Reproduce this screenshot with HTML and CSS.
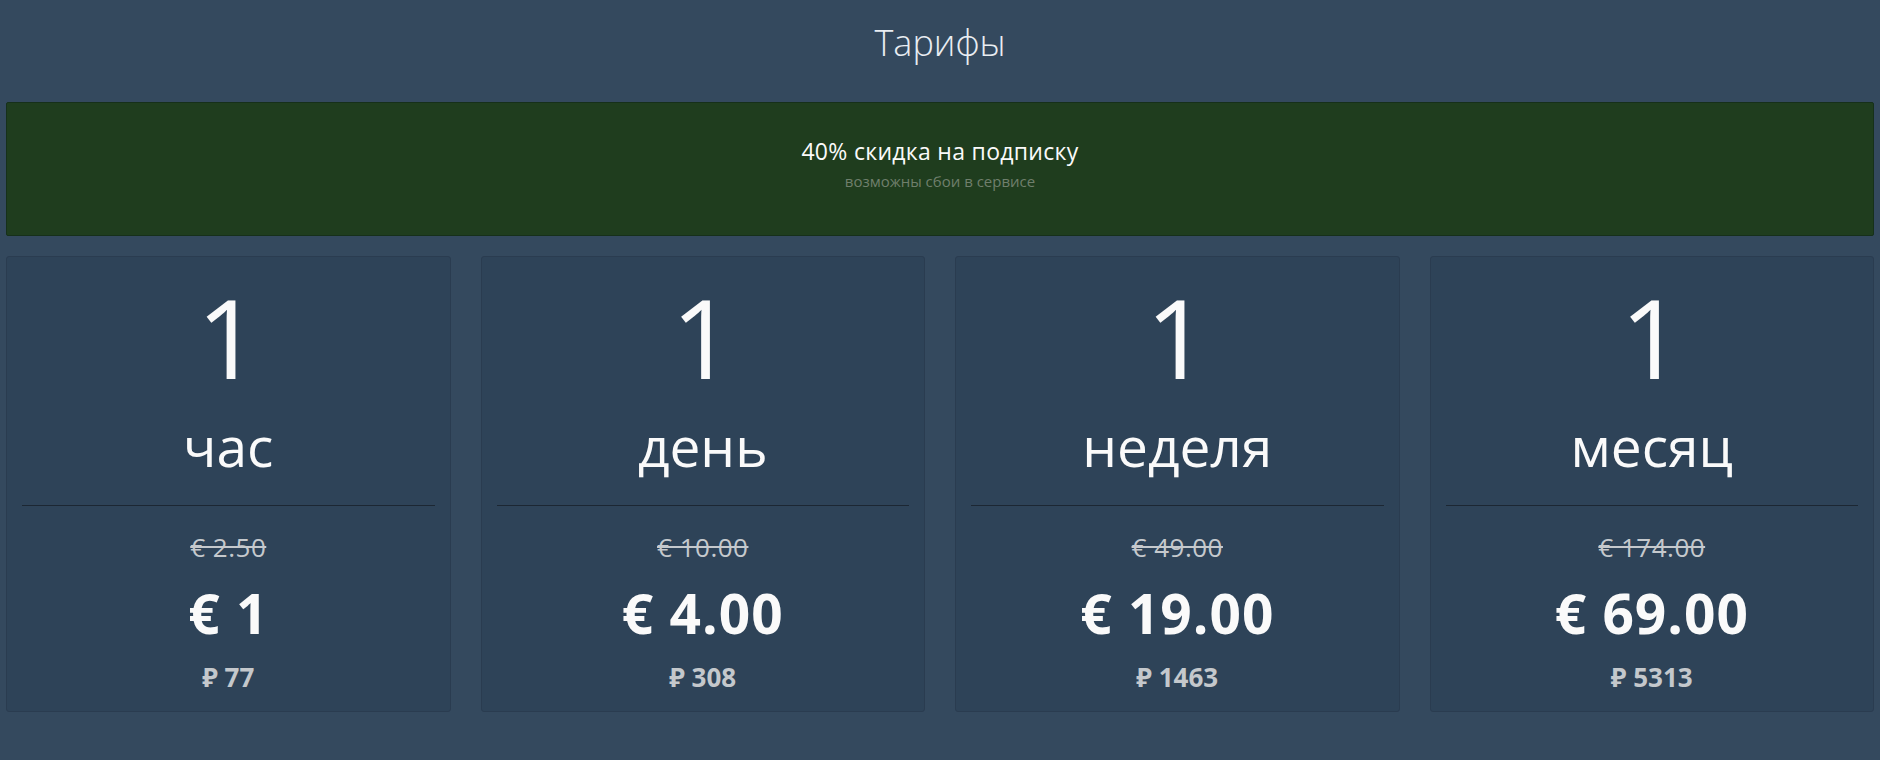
FILE: index.html
```html
<!DOCTYPE html>
<html lang="ru">
<head>
  <meta charset="UTF-8" />
  <title>Тарифы</title>
  <link rel="stylesheet" href="styles.css">
</head>
<body>
  <h1 class="title">Тарифы</h1>
  <div class="page">
    <div class="promo">
      <div class="promo-main">40% скидка на подписку</div>
      <div class="promo-sub">возможны сбои в сервисе</div>
    </div>

    <div class="plans">
      <div class="plan">
        <div class="plan-num">1</div>
        <div class="plan-name">час</div>
        <hr class="plan-line">
        <div class="plan-old">€ 2.50</div>
        <div class="plan-price">€ 1</div>
        <div class="plan-rub">₽ 77</div>
      </div>
      <div class="plan">
        <div class="plan-num">1</div>
        <div class="plan-name">день</div>
        <hr class="plan-line">
        <div class="plan-old">€ 10.00</div>
        <div class="plan-price">€ 4.00</div>
        <div class="plan-rub">₽ 308</div>
      </div>
      <div class="plan">
        <div class="plan-num">1</div>
        <div class="plan-name">неделя</div>
        <hr class="plan-line">
        <div class="plan-old">€ 49.00</div>
        <div class="plan-price">€ 19.00</div>
        <div class="plan-rub">₽ 1463</div>
      </div>
      <div class="plan">
        <div class="plan-num">1</div>
        <div class="plan-name">месяц</div>
        <hr class="plan-line">
        <div class="plan-old">€ 174.00</div>
        <div class="plan-price">€ 69.00</div>
        <div class="plan-rub">₽ 5313</div>
      </div>
    </div>
  </div>
</body>
</html>
```

FILE: styles.css
```css
body {
  margin: 0;
  background: #34495e;
  color: #fafafa;
  font-family: "Open Sans", "Noto Sans", sans-serif;
}
.title {
  margin: 21px 0 37px;
  font-size: 36px;
  line-height: 44px;
  font-weight: 300;
  text-align: center;
  color: #e9edf2;
}
.page {
  padding: 0 6px;
}
/* баннер со скидкой */
.promo {
  background: #1f3d1e;
  border: 1px solid #16301a;
  border-radius: 2px;
  padding: 35px 0 44px;
  text-align: center;
}
.promo-main {
  font-size: 23px;
  line-height: 27px;
  letter-spacing: 0.3px;
}
.promo-sub {
  margin-top: 7px;
  font-size: 15px;
  line-height: 19px;
  color: #6f7f6c;
}
/* карточки тарифов */
.plans {
  display: grid;
  grid-template-columns: repeat(4, 1fr);
  gap: 30px;
  margin-top: 20px;
}
.plan {
  background: #2e4358;
  border: 1px solid #2a3c50;
  border-radius: 3px;
  padding: 24px 15px 19px;
  text-align: center;
}
.plan-num {
  font-size: 110px;
  line-height: 110px;
  font-weight: 400;
}
.plan-name {
  margin-top: 25px;
  font-size: 55px;
  line-height: 60px;
}
.plan-line {
  margin: 29px 0 0;
  border: 0;
  border-top: 1px solid #1c2733;
}
.plan-old {
  margin-top: 26px;
  font-size: 26px;
  line-height: 30px;
  letter-spacing: 0.5px;
  color: #c5c9cd;
  text-decoration: line-through;
}
.plan-price {
  margin-top: 21px;
  font-size: 55px;
  line-height: 60px;
  font-weight: 700;
  letter-spacing: 1px;
}
.plan-rub {
  margin-top: 19px;
  font-size: 26px;
  line-height: 30px;
  font-weight: 700;
  color: #c4c8cc;
}
```
